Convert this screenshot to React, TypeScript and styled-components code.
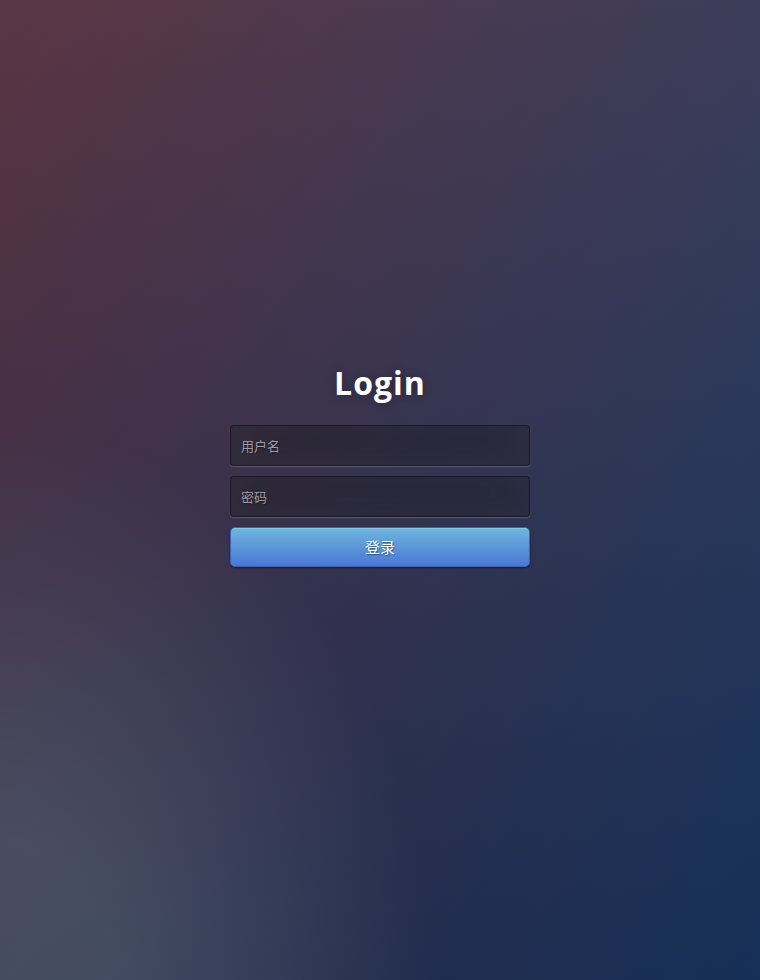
import React from "react";
import styled, { createGlobalStyle } from "styled-components";

const GlobalStyle = createGlobalStyle`
  * { box-sizing: border-box; }
  html, body { margin: 0; height: 100%; }
  html {
    background-color: #092756;
    background-image:
      radial-gradient(ellipse farthest-corner at 0% 100%, rgba(104,128,138,0.4) 10%, rgba(138,114,76,0) 40%),
      linear-gradient(to bottom, rgba(57,173,219,0.25) 0%, rgba(42,60,87,0.4) 100%),
      linear-gradient(135deg, #670d10 0%, #092756 100%);
    background-attachment: fixed;
  }
  body {
    font-family: "Open Sans", "Noto Sans CJK SC", sans-serif;
  }
`;

const Page = styled.div`
  height: 100vh;
  display: flex;
  align-items: center;
  justify-content: center;
`;

const LoginBox = styled.div`
  width: 300px;
  height: 300px;
`;

const Title = styled.h1`
  margin: 21px 0 21px;
  font-family: "Open Sans", "Noto Sans", sans-serif;
  font-size: 32px;
  line-height: 43px;
  font-weight: 700;
  color: #fff;
  text-align: center;
  letter-spacing: 1px;
  text-shadow: 0 0 10px rgba(0, 0, 0, 0.3);
`;

const Form = styled.form`
  display: flex;
  flex-direction: column;
  gap: 10px;
`;

const Input = styled.input`
  width: 100%;
  height: 41px;
  padding: 10px;
  font-family: "Noto Sans CJK SC", sans-serif;
  font-size: 13px;
  color: #fff;
  background: rgba(0, 0, 0, 0.3);
  border: 1px solid rgba(0, 0, 0, 0.3);
  border-radius: 4px;
  outline: none;
  text-shadow: 1px 1px 1px rgba(0, 0, 0, 0.3);
  box-shadow: inset 0 -5px 45px rgba(100, 100, 100, 0.2), 0 1px 1px rgba(255, 255, 255, 0.2);
  &::placeholder {
    color: #9a9aa6;
  }
`;

const Button = styled.button`
  width: 100%;
  height: 40px;
  padding: 9px 14px;
  font-family: "Noto Sans CJK SC", sans-serif;
  font-size: 15px;
  line-height: 20px;
  color: #fff;
  background-color: #4a77d4;
  background-image: linear-gradient(to bottom, #6eb6de, #4a77d4);
  border: 1px solid #3762bc;
  border-radius: 5px;
  text-shadow: 1px 1px 1px rgba(0, 0, 0, 0.4);
  box-shadow: inset 0 1px 0 rgba(255, 255, 255, 0.2), 0 1px 2px rgba(0, 0, 0, 0.5);
  cursor: pointer;
`;

export default function App() {
  return (
    <>
      <GlobalStyle />
      <Page>
        <LoginBox>
          <Title>Login</Title>
          <Form onSubmit={(e) => e.preventDefault()}>
            <Input type="text" placeholder="用户名" />
            <Input type="password" placeholder="密码" />
            <Button type="submit">登录</Button>
          </Form>
        </LoginBox>
      </Page>
    </>
  );
}
